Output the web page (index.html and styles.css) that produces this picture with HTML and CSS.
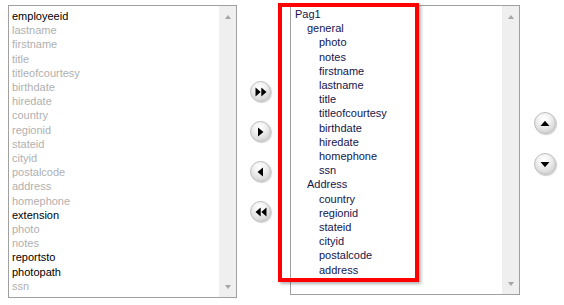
FILE: index.html
```html
<!DOCTYPE html>
<html>
<head>
<meta charset="utf-8">
<link rel="stylesheet" href="styles.css">
</head>
<body>
<div class="page">
  <div class="listbox left-box">
    <ul class="items source">
      <li class="on">employeeid</li>
      <li>lastname</li>
      <li>firstname</li>
      <li>title</li>
      <li>titleofcourtesy</li>
      <li>birthdate</li>
      <li>hiredate</li>
      <li>country</li>
      <li>regionid</li>
      <li>stateid</li>
      <li>cityid</li>
      <li>postalcode</li>
      <li>address</li>
      <li>homephone</li>
      <li class="on">extension</li>
      <li>photo</li>
      <li>notes</li>
      <li class="on">reportsto</li>
      <li class="on">photopath</li>
      <li>ssn</li>
    </ul>
    <div class="scrollbar">
      <span class="arrow up"></span>
      <span class="arrow down"></span>
    </div>
  </div>

  <div class="mid-buttons">
    <button class="round" aria-label="add all">
      <svg width="12" height="10" viewBox="0 0 12 10"><path d="M0.5 0.5 L5.7 5 L0.5 9.5 Z M6.3 0.5 L11.5 5 L6.3 9.5 Z" fill="#000"/></svg>
    </button>
    <button class="round" aria-label="add">
      <svg width="7" height="10" viewBox="0 0 7 10"><path d="M1 0.5 L6.5 5 L1 9.5 Z" fill="#000"/></svg>
    </button>
    <button class="round" aria-label="remove">
      <svg width="7" height="10" viewBox="0 0 7 10"><path d="M6 0.5 L0.5 5 L6 9.5 Z" fill="#000"/></svg>
    </button>
    <button class="round" aria-label="remove all">
      <svg width="12" height="10" viewBox="0 0 12 10"><path d="M5.7 0.5 L0.5 5 L5.7 9.5 Z M11.5 0.5 L6.3 5 L11.5 9.5 Z" fill="#000"/></svg>
    </button>
  </div>

  <div class="target-wrap">
    <div class="listbox right-box">
      <ul class="items tree">
        <li class="l0">Pag1</li>
        <li class="l1">general</li>
        <li class="l2">photo</li>
        <li class="l2">notes</li>
        <li class="l2">firstname</li>
        <li class="l2">lastname</li>
        <li class="l2">title</li>
        <li class="l2">titleofcourtesy</li>
        <li class="l2">birthdate</li>
        <li class="l2">hiredate</li>
        <li class="l2">homephone</li>
        <li class="l2">ssn</li>
        <li class="l1">Address</li>
        <li class="l2">country</li>
        <li class="l2">regionid</li>
        <li class="l2">stateid</li>
        <li class="l2">cityid</li>
        <li class="l2">postalcode</li>
        <li class="l2">address</li>
      </ul>
      <div class="scrollbar">
        <span class="arrow up"></span>
        <span class="arrow down"></span>
      </div>
    </div>
    <div class="highlight"></div>
  </div>

  <div class="side-buttons">
    <button class="round big" aria-label="move up">
      <svg width="10" height="7" viewBox="0 0 10 7"><path d="M0.5 6 L5 0.8 L9.5 6 Z" fill="#000"/></svg>
    </button>
    <button class="round big" aria-label="move down">
      <svg width="10" height="7" viewBox="0 0 10 7"><path d="M0.5 1 L5 6.2 L9.5 1 Z" fill="#000"/></svg>
    </button>
  </div>
</div>
</body>
</html>
```

FILE: styles.css
```css
* {
  box-sizing: border-box;
}

html, body {
  margin: 0;
  padding: 0;
  background: #ffffff;
}

body {
  font-family: "Liberation Sans", Arial, sans-serif;
  font-size: 11px;
}

.page {
  display: flex;
  align-items: flex-start;
  padding-top: 5px;
}

.listbox {
  display: flex;
  border: 1px solid #a0a0a0;
  background: #ffffff;
}

.left-box {
  margin-left: 8px;
  width: 229px;
  height: 293px;
}

.right-box {
  width: 230px;
  height: 290px;
}

.items {
  list-style: none;
  margin: 0;
  flex: 1;
  line-height: 14.2px;
  white-space: nowrap;
  overflow: hidden;
}

.source {
  padding: 3px 0 0 3px;
  color: #b0b0b0;
}

.source .on {
  color: #000000;
}

.tree {
  padding: 1px 0 0 4px;
  color: #15154d;
}

.tree .l1 {
  padding-left: 12px;
}

.tree .l2 {
  padding-left: 24px;
}

.scrollbar {
  width: 17px;
  background: #efefef;
  display: flex;
  flex-direction: column;
  justify-content: space-between;
  align-items: center;
  padding: 9px 0 8px 0;
}

.arrow {
  width: 0;
  height: 0;
  border-left: 3.5px solid transparent;
  border-right: 3.5px solid transparent;
}

.arrow.up {
  border-bottom: 4px solid #a6a6a6;
}

.arrow.down {
  border-top: 4px solid #a6a6a6;
}

.mid-buttons {
  display: flex;
  flex-direction: column;
  gap: 19px;
  margin-left: 13px;
  margin-top: 76px;
}

.round {
  width: 21px;
  height: 21px;
  padding: 0;
  border: 1px solid #bdbdbd;
  border-radius: 50%;
  background: radial-gradient(circle at 45% 30%, #ffffff 0%, #f4f4f4 30%, #dadada 70%, #bdbdbd 100%);
  box-shadow: 1px 1px 1px rgba(0, 0, 0, 0.2);
  display: flex;
  align-items: center;
  justify-content: center;
}

.round svg {
  display: block;
}

.round.big {
  width: 22px;
  height: 22px;
}

.target-wrap {
  position: relative;
  margin-left: 19px;
}

.highlight {
  position: absolute;
  left: -12px;
  top: -2px;
  width: 141px;
  height: 279px;
  border: 4px solid #ff0000;
  box-shadow: 2px 2px 3px rgba(0, 0, 0, 0.3);
  pointer-events: none;
}

.side-buttons {
  display: flex;
  flex-direction: column;
  gap: 19px;
  margin-left: 14px;
  margin-top: 107px;
}
```
